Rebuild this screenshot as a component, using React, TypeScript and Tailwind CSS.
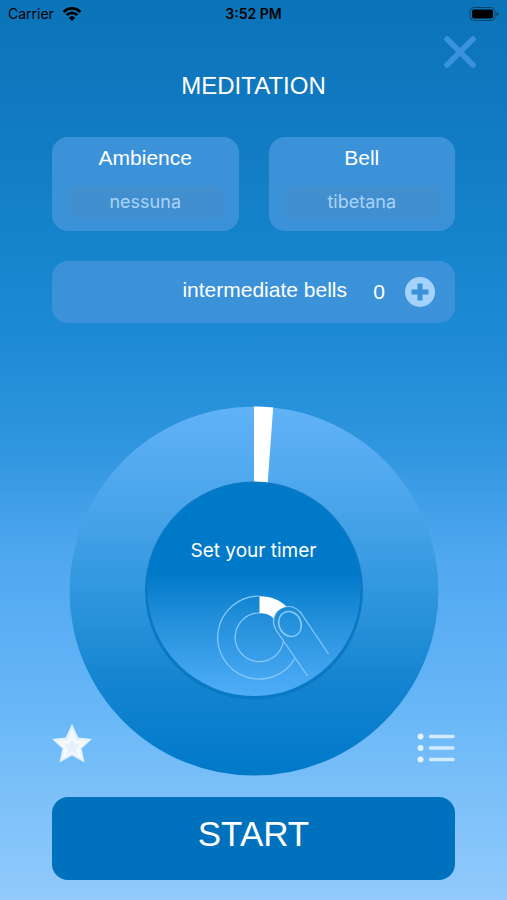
import { useState } from "react";

const sansFont = "font-['Liberation_Sans',Arial,sans-serif]";
const uiFont = "font-['Inter','Liberation_Sans',sans-serif]";

function StatusBar() {
  return (
    <div className="grid grid-cols-3 items-center h-7 pl-2 pr-2 text-black">
      <div className="flex items-center gap-2 text-sm">
        <span>Carrier</span>
        <svg viewBox="0 0 20 15" className="w-5 h-4" fill="none" stroke="currentColor" strokeWidth="2.8">
          <path d="M1.6 5.4a12 12 0 0 1 16.8 0" />
          <path d="M4.6 8.6a7.8 7.8 0 0 1 10.8 0" />
          <path d="M10 14.4 6.9 11.3a4.5 4.5 0 0 1 6.2 0z" fill="currentColor" stroke="none" />
        </svg>
      </div>
      <span className="text-center text-sm font-semibold">3:52 PM</span>
      <svg viewBox="0 0 32 14" className="w-8 h-3.5 justify-self-end">
        <rect x="3" y="0.5" width="25" height="13" rx="4" fill="none" stroke="black" strokeOpacity="0.4" />
        <rect x="5" y="2.5" width="21" height="9" rx="2" fill="black" />
        <path d="M29.5 5v4q2-.6 2-2t-2-2z" fill="black" fillOpacity="0.45" />
      </svg>
    </div>
  );
}

function OptionCard(props: { id: string; label: string; value: string }) {
  return (
    <div className="flex flex-col items-center rounded-2xl bg-[#3b92d8] h-[94px] px-4 pt-2">
      <span id={props.id} className="text-[21px] leading-[26px] text-white">
        {props.label}
      </span>
      <button
        type="button"
        aria-labelledby={props.id}
        className={`mt-[15px] w-full h-8 rounded-lg bg-[#418fce] text-lg leading-8 text-[#a9d3f8] cursor-pointer ${uiFont}`}
      >
        {props.value}
      </button>
    </div>
  );
}

function Dial() {
  return (
    <svg viewBox="0 0 370 370" className="block w-full" aria-hidden="true">
      <defs>
        <linearGradient id="ring" x1="0" y1="0" x2="0" y2="1">
          <stop offset="0" stopColor="#61b2f7" />
          <stop offset="0.28" stopColor="#49a4ea" />
          <stop offset="0.5" stopColor="#3097de" />
          <stop offset="0.75" stopColor="#1484d0" />
          <stop offset="1" stopColor="#0079c9" />
        </linearGradient>
        <linearGradient id="hub" x1="0" y1="0" x2="0" y2="1">
          <stop offset="0" stopColor="#0079c9" />
          <stop offset="0.42" stopColor="#0079c9" />
          <stop offset="0.65" stopColor="#2490db" />
          <stop offset="1" stopColor="#50adf8" />
        </linearGradient>
      </defs>
      <circle cx="185" cy="185" r="184.5" fill="url(#ring)" />
      <path d="M185 0.5A184.5 184.5 0 0 1 204.2 1.5L197 100H185z" fill="white" />
      <circle cx="185" cy="184.5" r="109" fill="#0a79c4" />
      <circle cx="185" cy="183.5" r="106.5" fill="url(#hub)" />
      <g fill="none" stroke="#8ccafa" strokeWidth="1.2">
        <path d="M226 252.500A41.5 41.5 0 1 1 190.5 190" />
        <path d="M214.500 235A24.3 24.3 0 1 1 190.5 207" />
        <path d="M238.500 270 207 224C200 211 209 200.500 219.500 200.500C227 200.500 231 205 234 210L259.500 248" />
        <ellipse cx="221" cy="218" rx="11" ry="12.8" transform="rotate(-25 221 218)" strokeWidth="1.5" />
      </g>
      <path d="M190.500 190.300C201 190 211 194 217.500 200.500C210 202.500 206 206 204.500 212.500C201 208.500 196 207.300 190.500 207.300z" fill="white" />
    </svg>
  );
}

export default function App() {
  const [bells, setBells] = useState(0);

  return (
    <main
      className={`min-h-screen flex flex-col bg-[linear-gradient(180deg,#0b73b7_0%,#1079c1_12%,#1584cc_27%,#1f8bd7_39%,#2e95de_49%,#50a8f0_62%,#65b5f7_77%,#7bc0f9_88%,#91cafb_100%)] text-white ${sansFont}`}
    >
      <div className={uiFont}>
        <StatusBar />
      </div>
      <div className="flex justify-end pt-2 pr-[31px]">
        <button type="button" aria-label="Close" className="size-8 cursor-pointer">
          <svg viewBox="0 0 32 32" className="size-8" stroke="#3b92dc" strokeWidth="5.5" strokeLinecap="round">
            <path d="M3 3 29 29M29 3 3 29" />
          </svg>
        </button>
      </div>
      <h1 className="mt-1 text-2xl leading-7 text-center">MEDITATION</h1>

      <div className="flex flex-col px-[52px] mt-[37px]">
        <div className="grid grid-cols-2 gap-[30px]">
          <OptionCard id="ambience" label="Ambience" value="nessuna" />
          <OptionCard id="bell" label="Bell" value="tibetana" />
        </div>

        <div className="mt-[30px] flex items-center justify-end h-[62px] rounded-2xl bg-[#3b92d8] pr-5">
          <span className="text-[21px] leading-[26px] pb-1">intermediate bells</span>
          <output className="w-8 ml-4 text-center text-[21px] leading-[26px]">{bells}</output>
          <button
            type="button"
            aria-label="Add intermediate bell"
            onClick={() => setBells(bells + 1)}
            className="ml-2.5 size-[30px] cursor-pointer"
          >
            <svg viewBox="0 0 30 30" className="size-[30px]">
              <circle cx="15" cy="15" r="15" fill="#a4d2fb" />
              <path d="M15 6.500v17M6.500 15h17" stroke="#3b92d8" strokeWidth="5" />
            </svg>
          </button>
        </div>

        {/* dial and the two corner buttons share one grid cell */}
        <div className="grid mt-[83px]">
          <div className="col-start-1 row-start-1 w-full max-w-[370px] mx-auto relative">
            <Dial />
            <p className={`absolute inset-x-0 top-[36%] text-[19px] leading-6 text-center ${uiFont}`}>
              Set your timer
            </p>
          </div>
          <div className="col-start-1 row-start-1 self-end flex justify-between items-end pb-2">
            <button type="button" aria-label="Favourites" className="z-10 mb-1 size-10 cursor-pointer">
              <svg viewBox="0 0 40 40" className="size-10">
                <path d="M20 0 26.2 13.500 40 15 29.500 24.500 32.500 38.500 20 31.500 7.500 38.500 10.500 24.500 0 15 13.800 13.500z" fill="#e3f1fe" />
                <path d="M20 6 24.600 16 35 17.500 27.500 24.600 29.500 34.500 20 29.500 10.500 34.500 12.500 24.600 5 17.500 15.400 16z" fill="#f4f9fe" />
                <path d="M20 15 22.400 20 28 20.800 24 24.600 25 30 20 27.400 15 30 16 24.600 12 20.800 17.600 20z" fill="#e6f0fb" />
              </svg>
            </button>
            <button type="button" aria-label="Sessions" className="z-10 size-10 cursor-pointer">
              <svg viewBox="0 0 40 40" className="size-10" fill="#e0f1ff">
                <circle cx="5.5" cy="8.5" r="3" />
                <circle cx="5.5" cy="20" r="3" />
                <circle cx="5.5" cy="31.5" r="3" />
                <path d="M15.500 8.500h22.500M15.500 20h22.500M15.500 31.500h22.500" stroke="#d3ebff" strokeWidth="3.5" strokeLinecap="round" />
              </svg>
            </button>
          </div>
        </div>

        <button
          type="button"
          className="mt-[21px] mb-5 h-[83px] pb-2.5 rounded-2xl bg-[#0071bd] text-[35px] leading-10 cursor-pointer"
        >
          START
        </button>
      </div>
    </main>
  );
}
